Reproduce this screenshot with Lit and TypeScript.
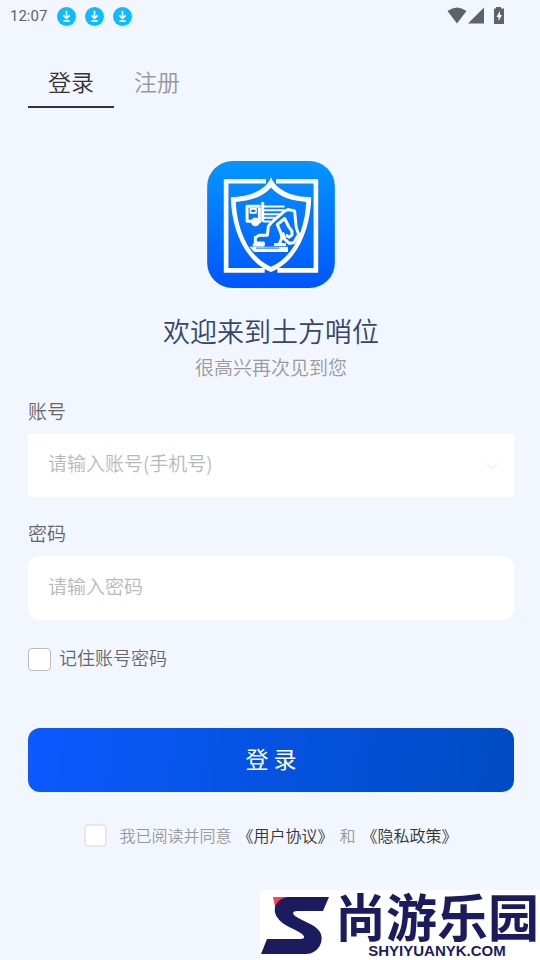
import { LitElement, html, css, svg } from "lit";
import { customElement, state } from "lit/decorators.js";

const download = html`<svg class="dl" viewBox="0 0 57 57" aria-hidden="true">
  <circle cx="28.5" cy="28.5" r="28.5" fill="#0cbcfb" />
  <path d="M28.500 11V33M19 25L28.500 34L38 25M19 42H38" fill="none" stroke="#fff" stroke-width="5" />
</svg>`;

const excavator = svg`
  <g fill="none" stroke="#fff" stroke-width="7" stroke-linejoin="round">
    <path d="M182 153H141V198H158" stroke-width="9" />
    <path d="M151 161H168V173H151Z" stroke-width="5" />
    <path d="M188 140V200M178 158V204" stroke-width="9" />
    <path d="M190 154H254M190 165H256M190 177H244M190 188H226M190 199H212" stroke-width="6" />
    <path d="M158 270H190V264H166V247L177 240H202L205 214L214 202L252 169L264 163L284 167L289 218L297 240" stroke-width="9" />
    <path d="M222 268H258M238 266L246 248L242 232L232 208L254 190L266 214L276 228V240L268 246L258 240" stroke-width="9" />
    <path d="M248 232L254 252L268 265L282 262L296 238" stroke-width="9" />
  </g>
  <circle cx="166" cy="200" r="13" fill="#fff" />
  <path d="M148 275H264V291H162Z" fill="#fff" />
  <path d="M168 279H238" stroke="#0a66ff" stroke-width="3" />`;

@customElement("app-root")
export class AppRoot extends LitElement {
  @state() private tab: "login" | "register" = "login";

  static styles = css`
    :host {
      display: block;
      position: relative;
      min-height: 100vh;
      background: #f2f7ff;
      font-family: "Noto Sans CJK SC", sans-serif;
      font-weight: 350;
      color: #666;
    }
    * { box-sizing: border-box; }
    svg { display: block; }
    button, input { font: inherit; margin: 0; }
    .status {
      display: flex;
      align-items: center;
      height: 32px;
      padding: 0 35px 0 10px;
      font: 400 15px/20px Roboto, sans-serif;
      color: #5f6266;
    }
    .notices { display: flex; gap: 9px; margin-left: 10px; }
    .dl { width: 19px; height: 19px; }
    .signals { margin-left: auto; width: 58px; height: 18px; }
    main { padding: 32px 26px 0 28px; }
    .tabs { display: flex; }
    .tab {
      padding: 0 20px;
      height: 44px;
      border: 0;
      border-bottom: 2px solid transparent;
      background: none;
      font-size: 23px;
      line-height: 34px;
      color: #999;
      display: flex;
    }
    .tab.on { color: #333; border-color: #333; }
    .brand {
      display: flex;
      flex-direction: column;
      align-items: center;
      padding-top: 53px;
    }
    .logo { width: 128px; height: 127px; }
    h1 {
      margin: 24px 0 0;
      font-size: 27px;
      line-height: 38px;
      font-weight: 350;
      color: #36456a;
    }
    .sub { margin: 0; font-size: 19px; line-height: 34px; color: #999; }
    .label { display: block; font-size: 19px; line-height: 28px; margin-top: 13px; }
    .second { margin-top: 22px; }
    .field {
      display: flex;
      align-items: center;
      height: 64px;
      margin-top: 9px;
      background: #fff;
    }
    .square { height: 63px; }
    .round { border-radius: 12px; }
    .field input {
      flex: 1;
      min-width: 0;
      height: 100%;
      padding: 0 20px 6px;
      border: 0;
      outline: 0;
      background: none;
      font-size: 19px;
      color: #333;
    }
    .field input::placeholder { color: #b8b8b8; opacity: 1; }
    .more { width: 44px; height: 44px; padding: 0 16px; border: 0; background: none; }
    .more svg { width: 12px; height: 8px; }
    .check {
      appearance: none;
      flex: none;
      width: 23px;
      height: 23px;
      border: 1px solid #bbb;
      border-radius: 4px;
      background: #fff;
    }
    .check:checked { background: #0a5aff; }
    .pale { border: 2px solid #e8e8e8; }
    .remember {
      display: flex;
      align-items: flex-end;
      gap: 8px;
      margin-top: 23px;
      font-size: 18px;
      line-height: 28px;
    }
    .submit {
      display: block;
      width: 100%;
      height: 64px;
      margin-top: 57px;
      padding: 0 0 4px;
      border: 0;
      border-radius: 12px;
      background: linear-gradient(100deg, #0a5aff, #004bc2);
      color: #fff;
      font-size: 23px;
      font-weight: 400;
    }
    .agree {
      display: flex;
      align-items: flex-end;
      justify-content: center;
      gap: 12px;
      margin-top: 31px;
      font-size: 16px;
      line-height: 24px;
      color: #999;
    }
    .terms { display: flex; gap: 6px; }
    .agree a { color: #333; text-decoration: none; }
    .mark {
      position: absolute;
      right: 0;
      bottom: 0;
      display: flex;
      width: 280px;
      height: 70px;
      background: #fff;
      color: #1b1c5e;
    }
    .mark svg { width: 74px; height: 70px; flex: none; }
    .words { flex: 1; text-align: center; white-space: nowrap; }
    .cn { font-size: 51px; line-height: 50px; font-weight: 700; }
    .en { font: 700 15px/22px "Liberation Sans", sans-serif; }
  `;

  render() {
    return html`
      <header class="status">
        <span>12:07</span>
        <span class="notices">${download}${download}${download}</span>
        <svg class="signals" viewBox="0 0 58 18" fill="#5f6266" aria-hidden="true">
          <path d="M0.500 4Q10 -3 19.500 4L10 16.500Z" />
          <path d="M37 0.500V16.500H21Z" />
          <path d="M49 0H54V1.500H57V17H47V1.500H49Z" />
          <path d="M53 4L49.500 10H51.500V14L55 8H53Z" fill="#fff" />
        </svg>
      </header>
      <main>
        <nav class="tabs">
          <button class="tab ${this.tab === "login" ? "on" : ""}" @click=${() => (this.tab = "login")}>登录</button>
          <button class="tab ${this.tab === "register" ? "on" : ""}" @click=${() => (this.tab = "register")}>注册</button>
        </nav>
        <section class="brand">
          <svg class="logo" viewBox="21 17 384 382" aria-hidden="true">
            <defs>
              <linearGradient id="sky" x1="0" y1="0" x2="0" y2="1">
                <stop offset="0" stop-color="#0496ff" />
                <stop offset="1" stop-color="#0055ff" />
              </linearGradient>
            </defs>
            <rect x="21" y="17" width="384" height="382" rx="76" fill="url(#sky)" />
            <path d="M198 78H78V346H194M232 346H348V78H228" fill="none" stroke="#fff" stroke-width="14" />
            <path d="M213 66C198 104 150 126 92 126C94 220 132 318 213 351C294 318 332 220 334 126C276 126 228 104 213 66ZM213 97C236 125 278 138 319 140C315 220 284 304 213 335C142 304 111 220 107 140C148 138 190 125 213 97Z" fill="#fff" fill-rule="evenodd" />
            ${excavator}
          </svg>
          <h1>欢迎来到土方哨位</h1>
          <p class="sub">很高兴再次见到您</p>
        </section>
        <form @submit=${(e: Event) => e.preventDefault()}>
          <label class="label" for="account">账号</label>
          <div class="field square">
            <input id="account" type="tel" placeholder="请输入账号(手机号)" />
            <button class="more" type="button" aria-label="选择账号">
              <svg viewBox="0 0 12 8" fill="none" stroke="#eff2fb" stroke-width="1.500"><path d="M0 1L6 7L12 1" /></svg>
            </button>
          </div>
          <label class="label second" for="password">密码</label>
          <div class="field round">
            <input id="password" type="password" placeholder="请输入密码" />
          </div>
          <div class="remember">
            <input class="check" id="remember" type="checkbox" />
            <label for="remember">记住账号密码</label>
          </div>
          <button class="submit" type="submit">登 录</button>
          <div class="agree">
            <input class="check pale" id="agree" type="checkbox" />
            <div class="terms">
              <label for="agree">我已阅读并同意</label>
              <a href="#terms">《用户协议》</a>
              <span>和</span>
              <a href="#privacy">《隐私政策》</a>
            </div>
          </div>
        </form>
      </main>
      <aside class="mark">
        <svg viewBox="0 0 74 70" aria-hidden="true">
          <path d="M13 7H30L16 22Z" fill="#ff4058" />
          <path d="M69 7H30C18 7 11 17 17 27C22 36 36 39 42 44C46 48 44 49 39 49H7L1 64H46C58 64 65 51 60 42C55 34 42 31 35 26C31 22 34 21 39 21H63Z" fill="#1b1c5e" />
        </svg>
        <div class="words">
          <div class="cn">尚游乐园</div>
          <div class="en">SHYIYUANYK.COM</div>
        </div>
      </aside>
    `;
  }
}
